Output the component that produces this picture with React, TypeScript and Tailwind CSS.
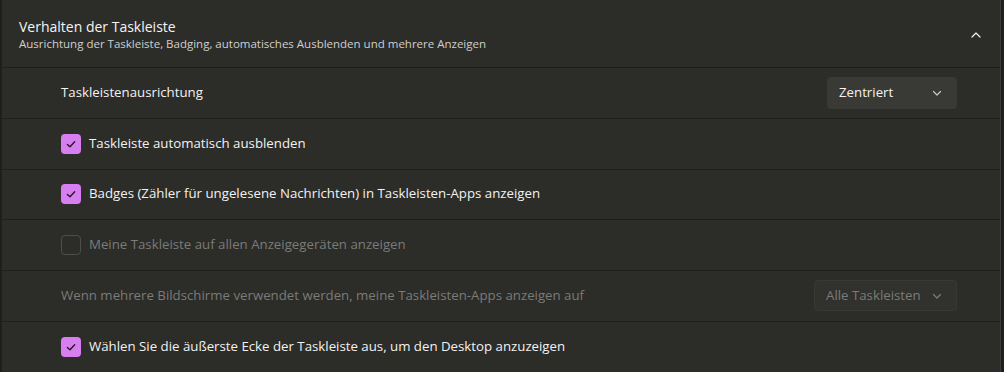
import React from "react";

const Check = () => (
  <svg width="12" height="12" viewBox="0 0 12 12" fill="none">
    <path d="M2.4 6.4 L5 8.8 L9.7 3.7" stroke="#1a1a1a" strokeWidth="1.3" strokeLinecap="round" strokeLinejoin="round" />
  </svg>
);

const Chevron = ({ up = false, color = "#d0d0d0" }: { up?: boolean; color?: string }) => (
  <svg width="12" height="12" viewBox="0 0 12 12" fill="none">
    <path
      d={up ? "M2 8 L6 4 L10 8" : "M2.5 4.5 L6 8 L9.5 4.5"}
      stroke={color}
      strokeWidth="1.2"
      strokeLinecap="round"
      strokeLinejoin="round"
    />
  </svg>
);

const CheckRow = ({
  label,
  checked,
  disabled = false,
}: {
  label: string;
  checked: boolean;
  disabled?: boolean;
}) => (
  <div className="h-[51px] flex items-center pl-[59px]">
    {checked ? (
      <span className="w-5 h-5 rounded-[4px] bg-[#d77ef0] flex items-center justify-center">
        <Check />
      </span>
    ) : (
      <span className="w-5 h-5 rounded-[4px] border border-[#4e4e4a]" />
    )}
    <span className={`ml-2 text-[13.25px] ${disabled ? "text-[#7b7b78]" : "text-[#f2f2f2]"}`}>
      {label}
    </span>
  </div>
);

export default function App() {
  return (
    <div
      className="w-[1004px] h-[372px] bg-[#1e1e1c] pl-[2px] pr-[3px] overflow-hidden"
      style={{ fontFamily: "'Open Sans', 'Noto Sans', sans-serif" }}
    >
      <div className="bg-[#2c2c28] h-full border-r border-[#3a3a37] flex flex-col divide-y divide-[#1e1e1c]">
        <div className="h-[68px] shrink-0 flex items-center pl-[17px] pr-[18px] pt-[2px]">
          <div className="flex-1">
            <div className="text-[14px] text-[#f4f4f4] leading-[18px]">Verhalten der Taskleiste</div>
            <div className="text-[11.5px] text-[#cfcfcf] leading-[16px]">
              Ausrichtung der Taskleiste, Badging, automatisches Ausblenden und mehrere Anzeigen
            </div>
          </div>
          <Chevron up color="#f0f0f0" />
        </div>

        <div className="h-[51px] shrink-0 flex items-center pl-[59px] pr-[43px]">
          <span className="flex-1 text-[13.25px] text-[#f2f2f2]">Taskleistenausrichtung</span>
          <div className="w-[130px] h-[32px] rounded-[4px] bg-[#393936] flex items-center pl-[12px] pr-[14px]">
            <span className="flex-1 text-[13.25px] text-[#f2f2f2]">Zentriert</span>
            <Chevron color="#c8c8c8" />
          </div>
        </div>

        <CheckRow label="Taskleiste automatisch ausblenden" checked />
        <CheckRow label="Badges (Zähler für ungelesene Nachrichten) in Taskleisten-Apps anzeigen" checked />
        <CheckRow label="Meine Taskleiste auf allen Anzeigegeräten anzeigen" checked={false} disabled />

        <div className="h-[51px] shrink-0 flex items-center pl-[59px] pr-[43px]">
          <span className="flex-1 text-[13.25px] text-[#7b7b78]">
            Wenn mehrere Bildschirme verwendet werden, meine Taskleisten-Apps anzeigen auf
          </span>
          <div className="w-[143px] h-[31px] rounded-[4px] bg-[#31312e] border border-[#383835] flex items-center pl-[11px] pr-[13px]">
            <span className="flex-1 text-[13.25px] text-[#7b7b78]">Alle Taskleisten</span>
            <Chevron color="#7b7b78" />
          </div>
        </div>

        <CheckRow label="Wählen Sie die äußerste Ecke der Taskleiste aus, um den Desktop anzuzeigen" checked />
      </div>
    </div>
  );
}
